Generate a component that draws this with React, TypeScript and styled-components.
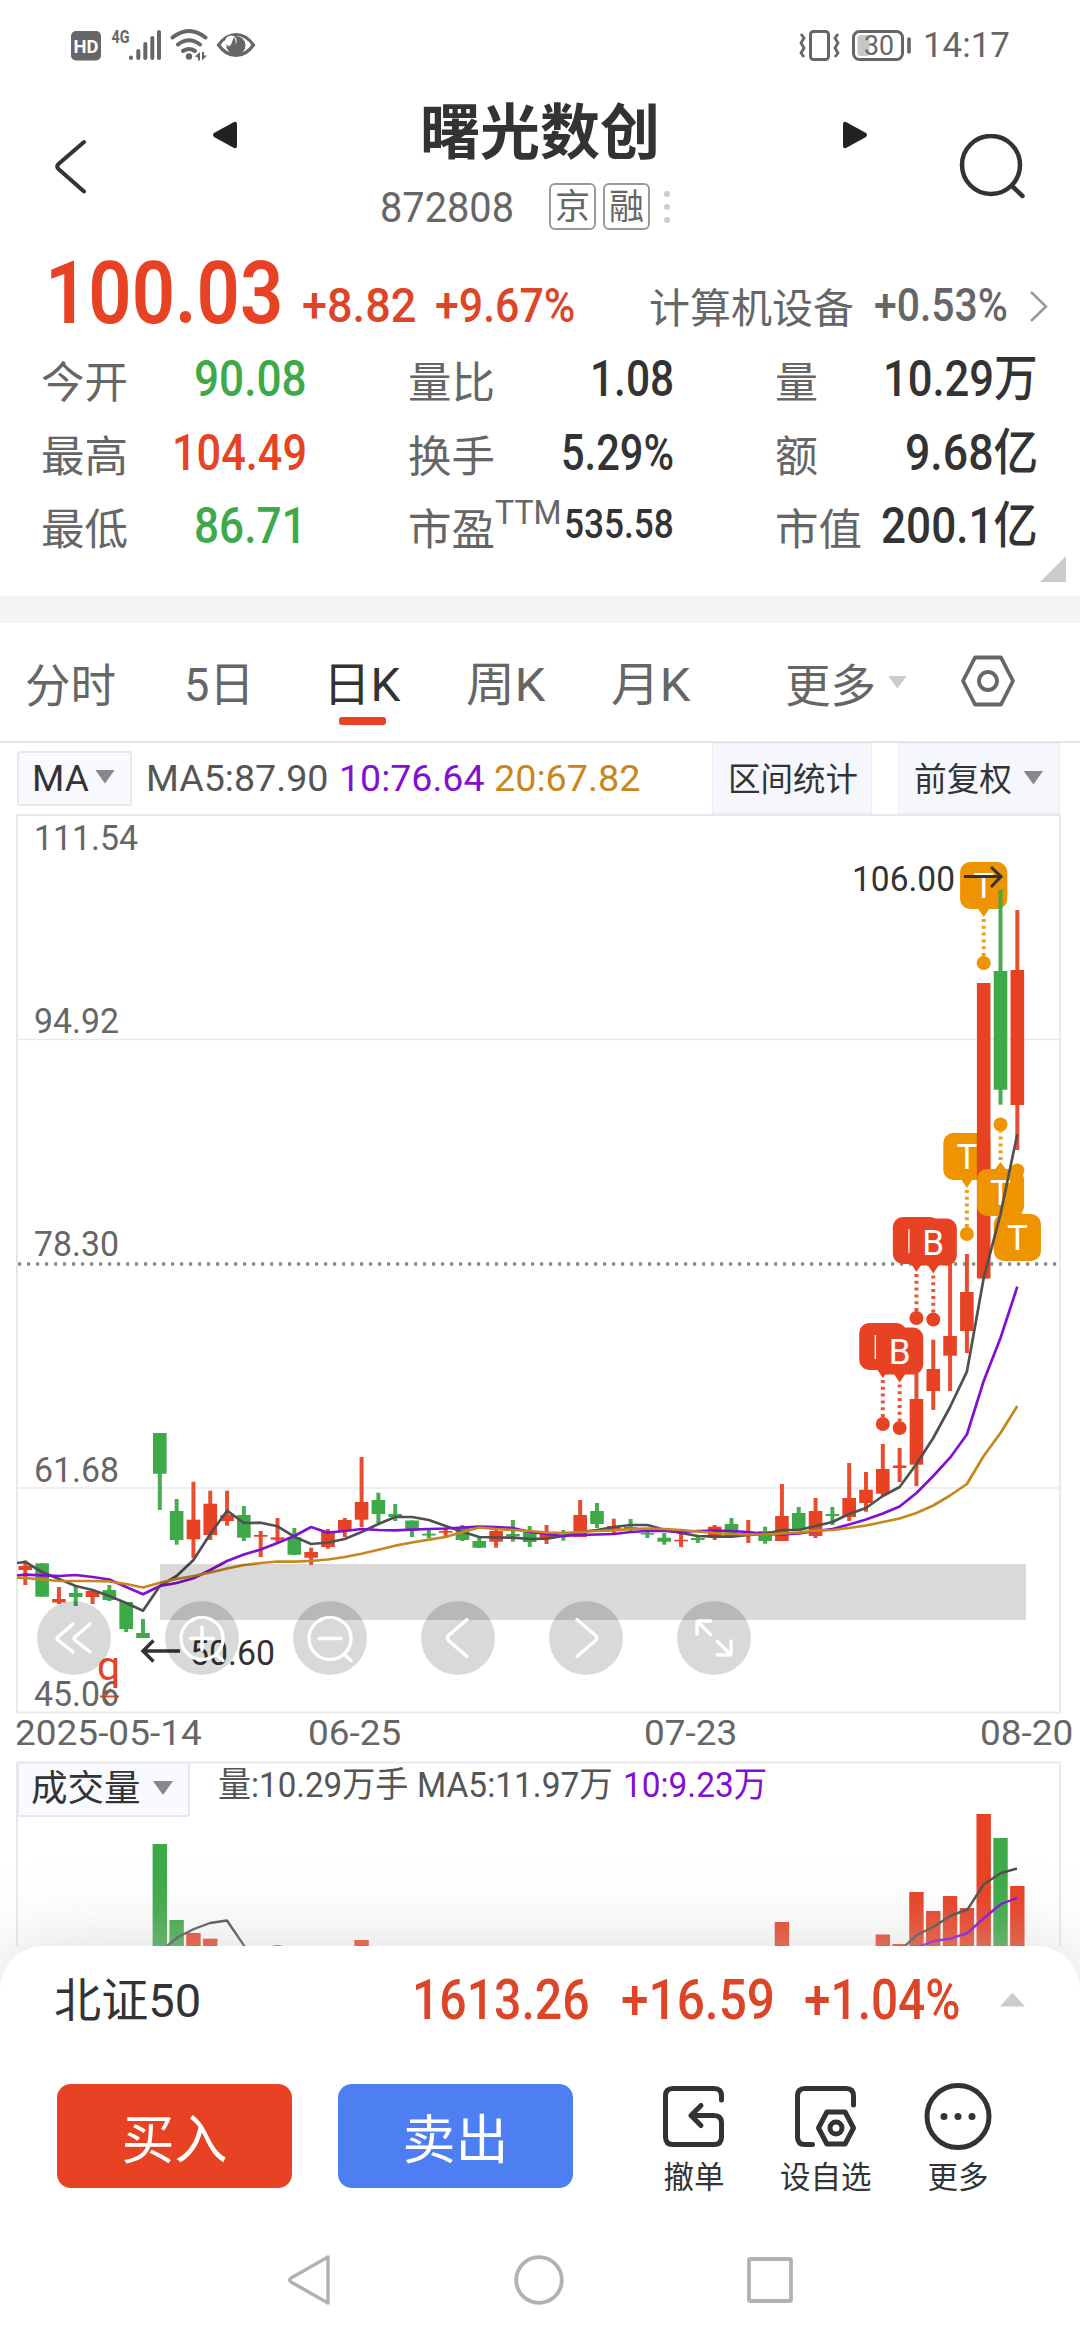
import React, { useLayoutEffect, useRef, useState } from "react";
import styled, { createGlobalStyle } from "styled-components";

const RED = "#e84224";
const GREEN = "#3ea948";
const INK = "#333333";
const GREY = "#666666";
const PURPLE = "#8210d2";
const GOLD = "#c8871e";
const AMBER = "#ed9400";
const LINE = "#e9e9e9";

const GlobalStyle = createGlobalStyle`
  * { box-sizing: border-box; }
  body {
    margin: 0;
    background: #fff;
    font-family: Roboto, "Noto Sans CJK SC", sans-serif;
    color: ${INK};
  }
  svg { display: block; flex: none; }
  svg text { font-family: Roboto, "Noto Sans CJK SC", sans-serif; }
`;

/* ---------- text fitted to a fixed advance width ---------- */

type LabelProps = {
  w: number;
  size: number;
  color?: string;
  weight?: number;
  ml?: number;
  dy?: number;
  children: React.ReactNode;
};

const LabelBox = styled.span<{ $w: number; $size: number; $color: string; $weight: number; $ml: number }>`
  display: block;
  flex: none;
  width: ${(p) => p.$w}px;
  margin-left: ${(p) => p.$ml}px;
  font-size: ${(p) => p.$size}px;
  font-weight: ${(p) => p.$weight};
  line-height: ${(p) => p.$size}px;
  color: ${(p) => p.$color};
  white-space: nowrap;
`;

const LabelInk = styled.span`
  display: inline-block;
  transform-origin: 0 50%;
`;

function Label({ w, size, color = INK, weight = 400, ml = 0, dy = 0, children }: LabelProps) {
  const ref = useRef<HTMLSpanElement>(null);
  const [scale, setScale] = useState(1);
  useLayoutEffect(() => {
    if (ref.current) setScale(w / ref.current.offsetWidth);
  }, [w, size, children]);
  return (
    <LabelBox $w={w} $size={size} $color={color} $weight={weight} $ml={ml}>
      <LabelInk ref={ref} style={{ transform: `translateY(${dy}px) scaleX(${scale})` }}>
        {children}
      </LabelInk>
    </LabelBox>
  );
}

/* ---------- layout ---------- */

const Screen = styled.main`
  width: 1080px;
  height: 2340px;
  overflow: hidden;
  background: #fff;
  display: flex;
  flex-direction: column;
`;

const StatusBar = styled.div`
  height: 89px;
  flex: none;
  display: flex;
  align-items: center;
  justify-content: space-between;
  padding: 0 70px;
`;

const Cluster = styled.div<{ $ml?: number }>`
  display: flex;
  align-items: center;
  margin-left: ${(p) => p.$ml ?? 0}px;
`;

const Header = styled.header`
  height: 156px;
  flex: none;
  display: grid;
  grid-template-columns: 212px 656px 212px;
`;

const HeaderSide = styled.div<{ $end?: boolean }>`
  display: flex;
  align-items: center;
  justify-content: ${(p) => (p.$end ? "flex-end" : "flex-start")};
  padding: 0 55px 0 54px;
`;

const TitleRow = styled.div`
  height: 86px;
  display: flex;
  align-items: center;
  justify-content: space-between;
`;

const StepArrow = styled.svg`
  width: 25px;
  height: 28px;
  margin-top: 6px;
  fill: #222;
`;

const CodeRow = styled.div`
  height: 63px;
  display: flex;
  align-items: center;
  padding-left: 168px;
`;

const Tag = styled.span`
  width: 47px;
  height: 47px;
  margin-right: 7px;
  border: 2px solid #999;
  border-radius: 6px;
  display: flex;
  align-items: center;
  justify-content: center;
  font-size: 35px;
  line-height: 43px;
  padding-top: 2px;
  color: ${GREY};
`;

const Dots = styled.span`
  display: grid;
  gap: 7px;
  margin-left: 7px;
  i {
    width: 6px;
    height: 6px;
    border-radius: 3px;
    background: #ccc;
  }
`;

const PriceRow = styled.section`
  height: 97px;
  flex: none;
  padding: 4px 32px 0 45px;
  display: flex;
  align-items: baseline;
`;

const Chevron = styled.svg`
  width: 20px;
  height: 32px;
  margin-left: 21px;
  fill: none;
  stroke: #999;
  stroke-width: 2.5;
`;

const Stats = styled.section`
  position: relative;
  height: 254px;
  flex: none;
  padding: 0 42px 0 41px;
  display: grid;
  grid-template-columns: 266px 367px 364px;
  grid-auto-rows: 73.5px;
`;

const Stat = styled.div<{ $pad: number }>`
  display: flex;
  align-items: baseline;
  justify-content: space-between;
  padding: 12px 0 0 ${(p) => p.$pad}px;
`;

/* The zero-width strut keeps every row on the same baseline. */
const LabelGroup = styled.div`
  display: flex;
  align-items: baseline;
  &::before {
    content: "\\200b";
    width: 0;
    font-size: 50px;
    line-height: 50px;
  }
`;

const Fold = styled.i`
  position: absolute;
  right: 14px;
  bottom: 14px;
  border-style: solid;
  border-width: 0 0 26px 26px;
  border-color: transparent transparent #ccc transparent;
`;

const Band = styled.div`
  height: 27px;
  flex: none;
  background: #f4f4f4;
`;

const Tabs = styled.nav`
  height: 120px;
  flex: none;
  display: flex;
  align-items: center;
  padding-left: 25px;
  border-bottom: 2px solid #e6e6e6;
`;

const Tab = styled.div<{ $active?: boolean; $ml?: number }>`
  height: 118px;
  margin-left: ${(p) => p.$ml ?? 0}px;
  padding-top: 38px;
  display: flex;
  flex-direction: column;
  align-items: center;
  gap: 9px;
  &::after {
    content: "";
    width: 47px;
    height: 8px;
    border-radius: 3px;
    background: ${(p) => (p.$active ? RED : "transparent")};
  }
`;

const SettingsIcon = styled.svg`
  width: 56px;
  height: 54px;
  margin-left: 53px;
  fill: none;
  stroke: ${GREY};
  stroke-width: 3.8;
`;

const Caret = styled.i<{ $w: number; $h: number; $color: string; $up?: boolean; $ml?: number; $mt?: number }>`
  flex: none;
  width: ${(p) => p.$w}px;
  height: ${(p) => p.$h}px;
  margin-left: ${(p) => p.$ml ?? 0}px;
  margin-top: ${(p) => p.$mt ?? 0}px;
  background: ${(p) => p.$color};
  clip-path: ${(p) => (p.$up ? "polygon(50% 0, 100% 100%, 0 100%)" : "polygon(0 0, 100% 0, 50% 100%)")};
`;

const Toolbar = styled.div`
  height: 71px;
  flex: none;
  display: flex;
  align-items: center;
  padding: 0 20px 0 17px;
`;

const Picker = styled.div<{ $w: number; $pad: number }>`
  width: ${(p) => p.$w}px;
  height: 55px;
  padding-left: ${(p) => p.$pad}px;
  display: flex;
  align-items: center;
  background: #f9faff;
  border: 2px solid #e8e8ea;
  border-radius: 3px;
`;

const SoftButton = styled.div<{ $w: number; $ml: number }>`
  width: ${(p) => p.$w}px;
  height: 71px;
  margin-left: ${(p) => p.$ml}px;
  padding-left: 15px;
  display: flex;
  align-items: center;
  background: #f5f7fd;
  border: 1px solid #eceef4;
`;

const ChartArea = styled.section`
  position: relative;
  height: 900px;
  flex: none;
`;

const Controls = styled.div`
  position: absolute;
  left: 37px;
  top: 787px;
  display: flex;
  gap: 54px;
`;

const Control = styled.button`
  width: 74px;
  height: 74px;
  padding: 0;
  border: 0;
  border-radius: 50%;
  background: rgba(0, 0, 0, 0.15);
`;

const Dates = styled.div`
  height: 47px;
  flex: none;
  display: flex;
  align-items: center;
  padding: 0 0 8px 15px;
`;

const VolumePanel = styled.section`
  position: relative;
  height: 185px;
  flex: none;
`;

const VolumeHead = styled.div`
  position: absolute;
  left: 17px;
  top: 1px;
  display: flex;
  align-items: center;
`;

const Sheet = styled.section`
  position: relative;
  flex: 1;
  background: #fff;
  border-radius: 44px 44px 0 0;
  box-shadow: 0 0 72px rgba(198, 198, 198, 0.62);
`;

const IndexRow = styled.div`
  height: 107px;
  padding: 0 0 0 54px;
  display: flex;
  align-items: center;
`;

const Actions = styled.div`
  height: 110px;
  margin-top: 30px;
  padding-left: 57px;
  display: flex;
  align-items: flex-start;
`;

const Trade = styled.button<{ $bg: string }>`
  width: 235px;
  height: 104px;
  margin: 1px 46px 0 0;
  padding: 4px 0 0;
  border: 0;
  border-radius: 14px;
  display: flex;
  align-items: center;
  justify-content: center;
  background: ${(p) => p.$bg};
  font-family: inherit;
`;

const Tool = styled.div<{ $w: number }>`
  width: ${(p) => p.$w}px;
  display: flex;
  flex-direction: column;
  align-items: center;
  gap: 11px;
`;

const NavBar = styled.div`
  height: 60px;
  margin-top: 57px;
  padding: 0 287px;
  display: flex;
  align-items: center;
  justify-content: space-between;
`;

/* ---------- data ---------- */

const X0 = 25.3;
const STEP = 16.814;
const cx = (i: number) => X0 + i * STEP;

type Candle = ["r" | "g", number, number, number, number];

const CANDLES: Candle[] = [
  ["r", 1559.5, 1565, 1569, 1584], ["g", 1562.3, 1562.3, 1595.7, 1595.7], ["r", 1586, 1598, 1601.5, 1603],
  ["g", 1585, 1592, 1596, 1605], ["r", 1588, 1590, 1596, 1603], ["g", 1584, 1589, 1599, 1600],
  ["g", 1601, 1601, 1628, 1631], ["g", 1618, 1632, 1637, 1637], ["g", 1432, 1432, 1472.7, 1509],
  ["g", 1498, 1510, 1539, 1543.7], ["r", 1480.7, 1518.7, 1538.3, 1557], ["r", 1489.7, 1502.7, 1534, 1539],
  ["r", 1489.7, 1514, 1520, 1524.7], ["g", 1505, 1514, 1536.7, 1540], ["r", 1530, 1534, 1535.7, 1556],
  ["r", 1517, 1536.3, 1538.7, 1542], ["g", 1527, 1536.3, 1553.7, 1554], ["r", 1546.7, 1551, 1556.7, 1563.7],
  ["r", 1528, 1531, 1546, 1547.7], ["r", 1517, 1519, 1530, 1536], ["r", 1456, 1501, 1518.7, 1526],
  ["g", 1491.7, 1499, 1513, 1522], ["g", 1503, 1513, 1516, 1520], ["g", 1519.5, 1519.5, 1528, 1536],
  ["g", 1529, 1532.7, 1534.5, 1537], ["r", 1526.7, 1530, 1531.7, 1536.7], ["g", 1524, 1527, 1539, 1540],
  ["g", 1537, 1540, 1546.7, 1547], ["r", 1527.7, 1530, 1540.7, 1546.7], ["g", 1519, 1533, 1535.3, 1540.7],
  ["g", 1525, 1531, 1541, 1546], ["r", 1524, 1532, 1537.5, 1543], ["g", 1529, 1531, 1532.5, 1539.7],
  ["r", 1499, 1514, 1536, 1536], ["g", 1502, 1510, 1523, 1527], ["r", 1517.7, 1525, 1530, 1532],
  ["g", 1518, 1526, 1528, 1530], ["g", 1528, 1532, 1533.5, 1537], ["g", 1532, 1536.7, 1540.7, 1543.7],
  ["r", 1533, 1538.7, 1540.3, 1546], ["g", 1535, 1537, 1539, 1542], ["r", 1524, 1525.7, 1536.7, 1539],
  ["g", 1517, 1523, 1535, 1536], ["r", 1519, 1531, 1533, 1542], ["g", 1525.7, 1530, 1540, 1542.7],
  ["r", 1483, 1515, 1540, 1540], ["g", 1506, 1512, 1528.7, 1529], ["r", 1497, 1510, 1535, 1537],
  ["g", 1506, 1513, 1515, 1524], ["r", 1462, 1497, 1516, 1520], ["r", 1471, 1488.7, 1502, 1510.7],
  ["r", 1443, 1468, 1492.7, 1495], ["r", 1447, 1464.5, 1467, 1481], ["r", 1367, 1398, 1463.7, 1485],
  ["r", 1338.7, 1368, 1390, 1409], ["r", 1263, 1335, 1354.7, 1390], ["r", 1253, 1291, 1330, 1352],
  ["r", 982, 982, 1277.5, 1277.5], ["g", 888.7, 970, 1088.7, 1103.7], ["r", 909, 969, 1104, 1149],
];

const MA5 = [
  1561, 1571, 1578, 1585, 1589, 1595, 1602, 1609.7, 1585, 1575, 1559, 1533, 1509.7, 1522, 1521.7, 1525.3, 1535.7,
  1543, 1541.5, 1538, 1531, 1523, 1516, 1516, 1519, 1525, 1530.7, 1536, 1536.5, 1536.7, 1538, 1537.7, 1535, 1531,
  1529, 1526, 1524, 1524, 1528.7, 1532, 1535, 1535.7, 1535.7, 1534, 1533, 1529, 1529, 1525, 1521, 1513, 1507, 1495,
  1486, 1463, 1437, 1406, 1370.7, 1277, 1213, 1133,
];
const MA10 = [
  1573.7, 1574.3, 1575, 1574, 1576, 1578.5, 1586, 1593.3, 1585, 1582, 1577.3, 1569, 1560, 1553.5, 1548.5, 1542, 1535,
  1526, 1531.7, 1530, 1528, 1529, 1529.3, 1528.7, 1528, 1527.5, 1526.5, 1525.7, 1526, 1527, 1531, 1533, 1535, 1534,
  1533.5, 1533, 1531, 1530, 1530, 1531, 1530, 1529.5, 1530, 1531, 1533, 1533.5, 1532.5, 1530, 1528, 1523.5, 1518.5,
  1512.5, 1505.5, 1492, 1475, 1456.7, 1433.5, 1380, 1337, 1285.7,
];
const MA20 = [
  1577, 1578.5, 1580, 1580, 1580, 1580.5, 1583, 1586.5, 1581.7, 1578, 1575, 1571.5, 1567.5, 1564, 1562, 1560.5,
  1560.7, 1560, 1558.5, 1556, 1552.7, 1548.7, 1544.7, 1541.5, 1538.7, 1536, 1531, 1526.5, 1528, 1529, 1530, 1531.5,
  1532, 1531, 1530, 1529.3, 1528, 1527.5, 1528, 1529, 1530.5, 1532, 1533, 1533.5, 1533.5, 1532.5, 1531.5, 1529.7,
  1529, 1527, 1524.5, 1521, 1517.5, 1512, 1504.5, 1494.5, 1483, 1455, 1432, 1405,
];

const VOLUMES: [number, "r" | "g", number][] = [
  [8, "g", 1843], [9, "g", 1919], [10, "r", 1932], [11, "r", 1937.7], [20, "r", 1939], [45, "r", 1921],
  [51, "r", 1933.5], [52, "r", 1943], [53, "r", 1891], [54, "r", 1910], [55, "r", 1895], [56, "r", 1907],
  [57, "r", 1813], [58, "g", 1837], [59, "r", 1885],
];

const tone = (c: "r" | "g") => (c === "r" ? RED : GREEN);
const path = (start: number, ys: number[]) => `17,${start} ` + ys.map((y, i) => `${cx(i)},${y}`).join(" ");

/* ---------- chart pieces ---------- */

const Candles = () => (
  <>
    {CANDLES.map(([c, hi, top, bot, lo], i) => (
      <g key={i} fill={tone(c)}>
        <rect x={cx(i) - 2} y={hi} width={4} height={lo - hi} opacity={0.95} />
        <rect x={cx(i) - 6.8} y={top} width={13.6} height={bot - top} />
      </g>
    ))}
  </>
);

type PinProps = { i: number; top: number; dot: number; color: string; text?: string; up?: boolean };

function Pin({ i, top, dot, color, text, up }: PinProps) {
  const x = cx(i);
  return (
    <g>
      <line
        x1={x} x2={x}
        y1={up ? top - 9 : top + 57} y2={up ? dot + 7 : dot - 7}
        stroke={color} strokeWidth={4} strokeDasharray="3 3.8" opacity={0.9}
      />
      <circle cx={x} cy={dot} r={7} fill={color} />
      <rect x={x - 23.6} y={top} width={47.2} height={47} rx={10} fill={color} />
      <path
        d={up ? `M${x - 6} ${top + 1}l6 -8l6 8z` : `M${x - 6} ${top + 46}l6 9l6 -9z`}
        fill={color}
      />
      {text === "|" ? (
        <line x1={x - 7.4} x2={x - 7.4} y1={top + 12} y2={top + 36} stroke="#fff" strokeWidth={1.5} />
      ) : (
        <text x={x} y={top + 36} fontSize={35} fill="#fff" textAnchor="middle">{text}</text>
      )}
    </g>
  );
}

const SCALE: [string, number, number][] = [
  ["111.54", 848.5, 104], ["94.92", 1031.5, 85], ["78.30", 1255, 85], ["61.68", 1480.5, 85], ["45.06", 1704.5, 85],
];

function PriceChart() {
  return (
    <svg width={1080} height={900} viewBox="0 813 1080 900">
      <g stroke={LINE} strokeWidth={2} fill="none">
        <rect x={17} y={814} width={1043} height={897.5} />
        <path d="M17 1038.5H1059M17 1487H1059" strokeWidth={1.6} />
      </g>
      <line x1={18} x2={1058} y1={1263} y2={1263} stroke="#8c8c8c" strokeWidth={3.5} strokeDasharray="3.2 5.8" />
      <Pin i={57} top={861} dot={962} color={AMBER} text="T" />
      <Pin i={56} top={1132} dot={1233} color={AMBER} text="T" />
      <Candles />
      <Pin i={53} top={1216} dot={1317} color={RED} text="|" />
      <Pin i={54} top={1217.5} dot={1318.5} color={RED} text="B" />
      <Pin i={51} top={1322} dot={1423} color={RED} text="|" />
      <Pin i={52} top={1326.5} dot={1427} color={RED} text="B" />
      <Pin i={59} top={1213} dot={1169.5} color={AMBER} text="T" up />
      <Pin i={58} top={1168} dot={1123.5} color={AMBER} text="T" up />
      <g fill="none" strokeWidth={2.7} strokeLinejoin="round">
        <polyline points={path(1562, MA5)} stroke="#505050" />
        <polyline points={path(1574.5, MA10)} stroke={PURPLE} />
        <polyline points={path(1576.7, MA20)} stroke={GOLD} />
      </g>
      <rect x={160} y={1563} width={866} height={56} fill="#000" opacity={0.15} />
      <g fill={RED}>
        <text x={97} y={1679} fontSize={41}>q</text>
        <path d="M100 1695.5H119M103 1696L109 1703M111 1688l-5 6" stroke={RED} strokeWidth={2} />
      </g>
      <g fill={GREY} fontSize={35}>
        {SCALE.map(([t, y, w]) => (
          <text key={t} x={34} y={y} textLength={w} lengthAdjust="spacingAndGlyphs">{t}</text>
        ))}
      </g>
      <g stroke={INK} fill="none">
        <path d="M964 875.5H1000M991 866L1001 875.5L991 886" strokeWidth={3} />
        <path d="M180 1650H144M153.5 1639.5L143 1650L153.5 1660.5" strokeWidth={3.4} />
      </g>
      <g fill={INK} fontSize={35}>
        <text x={852} y={889.5} textLength={103} lengthAdjust="spacingAndGlyphs">106.00</text>
        <text x={190} y={1663.5} textLength={85} lengthAdjust="spacingAndGlyphs">50.60</text>
      </g>
    </svg>
  );
}

function VolumeChart() {
  return (
    <svg width={1080} height={185} viewBox="0 1760 1080 185">
      <path d="M17 1945V1761.5H1060V1945" fill="none" stroke={LINE} strokeWidth={2} />
      {VOLUMES.map(([i, c, y]) => (
        <rect key={i} x={cx(i) - 7.2} y={y} width={14.4} height={1945 - y} fill={tone(c)} />
      ))}
      <g fill="none" strokeWidth={2.4} strokeLinejoin="round">
        <path d="M167 1945L178 1936L194 1928L210 1922L227 1919.5L245 1946" stroke="#505050" />
        <path d="M905 1945L917 1934L934 1925.5L951 1914.5L967.5 1908.5L984 1883L1001 1872L1017 1867.5" stroke="#505050" />
        <path d="M918 1946L934 1940L951 1937.5L967.5 1932L984 1917L1001 1903L1017 1897" stroke={PURPLE} />
        <path d="M271 1946.5Q277 1944.5 284 1946.5" stroke={PURPLE} />
      </g>
    </svg>
  );
}

const CONTROL_ICONS = [
  "M36 23L21 36Q19 37.5 21 39L36 51M53 23L38 36Q36 37.5 38 39L53 51",
  "M58 37.5A21 21 0 1 1 16 37.5A21 21 0 1 1 58 37.5M37 26V49M25.5 37.5H48.5M51 53L58 59.5",
  "M58 37.5A21 21 0 1 1 16 37.5A21 21 0 1 1 58 37.5M26 37.5H48M51 53L58 59.5",
  "M46 18.5L27.5 34.5Q25 37 27.5 39.5L46 55.5",
  "M28 18.5L46.5 34.5Q49 37 46.5 39.5L28 55.5",
  "M20 33V22Q20 20 22 20H33.5M21 21L33.5 33.5M54 40V52Q54 54 52 54H40M53 53L40.5 40.5",
];

const hexagon = (x: number, y: number, rx: number, ry: number) =>
  `M${x - rx} ${y}L${x - rx * 0.52} ${y - ry}H${x + rx * 0.52}L${x + rx} ${y}L${x + rx * 0.52} ${y + ry}H${x - rx * 0.52}Z`;

/* ---------- screen ---------- */

type StatItem = { name: string; nw: number; value: string; vw: number; color?: string; size?: number; sup?: string };

const STATS: StatItem[] = [
  { name: "今开", nw: 87, value: "90.08", vw: 113, color: GREEN },
  { name: "量比", nw: 87, value: "1.08", vw: 84 },
  { name: "量", nw: 43.5, value: "10.29万", vw: 155 },
  { name: "最高", nw: 87, value: "104.49", vw: 135, color: RED },
  { name: "换手", nw: 87, value: "5.29%", vw: 113 },
  { name: "额", nw: 43.5, value: "9.68亿", vw: 133 },
  { name: "最低", nw: 87, value: "86.71", vw: 113, color: GREEN },
  { name: "市盈", nw: 87, value: "535.58", vw: 110, size: 40, sup: "TTM" },
  { name: "市值", nw: 87, value: "200.1亿", vw: 157 },
];

export default function App() {
  return (
    <Screen>
      <GlobalStyle />
      <StatusBar>
        <Cluster>
          <svg width={190} height={36} viewBox="70 26 190 36" fill={GREY}>
            <rect x={71} y={30} width={30} height={29.5} rx={5} />
            <text x={73.5} y={52} fontSize={19} fontWeight={700} fill="#fff" textLength={25} lengthAdjust="spacingAndGlyphs">HD</text>
            <text x={111.5} y={42} fontSize={18} fontWeight={700} textLength={18} lengthAdjust="spacingAndGlyphs">4G</text>
            <g stroke={GREY} strokeWidth={4} strokeLinecap="round" fill="none">
              <path d="M131 56.5V57M138.3 50V57M145.3 43V57M152.3 37V57M159 31V57" />
              <path d="M172.5 36.5Q189 23.5 205.5 36.5M178 43.5Q189 35 200 43.5M183 50Q189 46 195 50" />
              <path d="M218.5 44Q226 33.5 236 33.5T253.5 44Q246 54.5 236 54.5T218.5 44Z" strokeWidth={3.2} />
            </g>
            <circle cx={189} cy={55.5} r={3.2} />
            <path d="M195 55.5L200 51V59.5H198V56.5ZM202 51V59.5L207 54.5H204V51Z" />
            <circle cx={236} cy={44.5} r={9.5} />
            <circle cx={231} cy={40} r={5.6} fill="#fff" />
            <path d="M234 36q4 6 -1 12q-5 2 -7 -2q5 0 6 -5z" />
          </svg>
        </Cluster>
        <Cluster>
          <svg width={114} height={36} viewBox="798 26 114 36" fill="none" stroke={GREY}>
            <rect x={810.5} y={30.5} width={18} height={28} rx={3} strokeWidth={3} />
            <path d="M801 33l3 4l-3 5l3 5l-3 5l3 4M838 33l-3 4l3 5l-3 5l3 5l-3 4" strokeWidth={2.8} />
            <rect x={853.5} y={30.5} width={49} height={28} rx={6} strokeWidth={3} />
            <rect x={857.5} y={34} width={12} height={21} rx={3} fill="#c6c6c6" stroke="none" />
            <path d="M909 38V51" strokeWidth={3.6} strokeLinecap="round" />
            <text x={864} y={54} fontSize={27} fill={GREY} stroke="none" textLength={30} lengthAdjust="spacingAndGlyphs">30</text>
          </svg>
          <Label w={87} size={34.5} color={GREY} ml={11} dy={1}>14:17</Label>
        </Cluster>
      </StatusBar>

      <Header>
        <HeaderSide>
          <svg width={34} height={56} viewBox="54 139 34 56" fill="none" stroke={INK} strokeWidth={4} strokeLinecap="round">
            <path d="M84 142L58.5 164Q56 166.5 58.5 169L84 191.5" />
          </svg>
        </HeaderSide>
        <div>
          <TitleRow>
            <StepArrow viewBox="0 0 25 28"><path d="M22 1Q25 0 25 4V24Q25 28 22 27L2 16Q0 14 2 12Z" /></StepArrow>
            <Label w={240} size={60} weight={700} dy={2}>曙光数创</Label>
            <StepArrow viewBox="0 0 25 28"><path d="M3 1Q0 0 0 4V24Q0 28 3 27L23 16Q25 14 23 12Z" /></StepArrow>
          </TitleRow>
          <CodeRow>
            <Label w={134} size={43} color={GREY} dy={1}>872808</Label>
            <Cluster $ml={35}>
              <Tag>京</Tag>
              <Tag>融</Tag>
              <Dots><i /><i /><i /></Dots>
            </Cluster>
          </CodeRow>
        </div>
        <HeaderSide $end>
          <svg width={66} height={66} viewBox="958 134 66 66" fill="none" stroke={INK} strokeWidth={4.5} strokeLinecap="round">
            <circle cx={990} cy={165} r={29} />
            <path d="M1011 186L1021.5 196" />
          </svg>
        </HeaderSide>
      </Header>

      <PriceRow>
        <Label w={238} size={88} weight={600} color={RED}>100.03</Label>
        <Label w={114} size={49} weight={500} color="#dc4528" ml={19} dy={-1}>+8.82</Label>
        <Label w={140} size={49} weight={500} color="#dc4528" ml={19} dy={-1}>+9.67%</Label>
        <Label w={205} size={41} color={GREY} ml={74} dy={0}>计算机设备</Label>
        <Label w={134} size={47} weight={500} color={GREY} ml={20} dy={-2}>+0.53%</Label>
        <Chevron viewBox="0 0 20 32">
          <path d="M2 1L17 15.5L2 30" />
        </Chevron>
      </PriceRow>

      <Stats>
        {STATS.map((s, i) => (
          <Stat key={s.name} $pad={i % 3 === 0 ? 0 : 101}>
            <LabelGroup>
              <Label w={s.nw} size={43.5} color={GREY} dy={1.5}>{s.name}</Label>
              {s.sup && <Label w={67} size={34} color={GREY} dy={-19}>{s.sup}</Label>}
            </LabelGroup>
            <Label w={s.vw} size={s.size ?? 50} weight={500} color={s.color} dy={s.size ? -5 : 0}>{s.value}</Label>
          </Stat>
        ))}
        <Fold />
      </Stats>

      <Band />

      <Tabs>
        <Tab><Label w={91} size={46} color={GREY} dy={2}>分时</Label></Tab>
        <Tab $ml={68}><Label w={70} size={47} color={GREY}>5日</Label></Tab>
        <Tab $ml={69} $active><Label w={78} size={47}>日K</Label></Tab>
        <Tab $ml={65}><Label w={80} size={47} color={GREY}>周K</Label></Tab>
        <Tab $ml={65}><Label w={80} size={47} color={GREY}>月K</Label></Tab>
        <Tab $ml={94}><Label w={91} size={46} color={GREY} dy={2}>更多</Label></Tab>
        <Caret $w={19} $h={13} $color="#ccc" $ml={12} $mt={0} />
        <SettingsIcon viewBox="0 0 56 54">
          <path d={hexagon(28, 26, 25, 23.5)} strokeLinejoin="round" />
          <circle cx={28} cy={26} r={9} />
        </SettingsIcon>
      </Tabs>

      <Toolbar>
        <Picker $w={115} $pad={13}>
          <Label w={57} size={37}>MA</Label>
          <Caret $w={20} $h={14} $color="#888" $ml={6} $mt={-4} />
        </Picker>
        <Label w={182} size={37} color="#555" ml={14}>MA5:87.90</Label>
        <Label w={145} size={37} color={PURPLE} ml={11}>10:76.64</Label>
        <Label w={146} size={37} color={GOLD} ml={10}>20:67.82</Label>
        <SoftButton $w={161} $ml={72}>
          <Label w={130} size={33} dy={1}>区间统计</Label>
        </SoftButton>
        <SoftButton $w={162} $ml={26}>
          <Label w={98} size={33} dy={1}>前复权</Label>
          <Caret $w={20} $h={14} $color="#888" $ml={11} $mt={-2} />
        </SoftButton>
      </Toolbar>

      <ChartArea>
        <PriceChart />
        <Controls>
          {CONTROL_ICONS.map((d) => (
            <Control key={d}>
              <svg width={74} height={74} viewBox="0 0 74 74" fill="none" stroke="#fff" strokeWidth={3.4} strokeLinecap="round">
                <path d={d} />
              </svg>
            </Control>
          ))}
        </Controls>
      </ChartArea>

      <Dates>
        <Label w={187} size={35} color={GREY}>2025-05-14</Label>
        <Label w={93} size={35} color={GREY} ml={106}>06-25</Label>
        <Label w={93} size={35} color={GREY} ml={243}>07-23</Label>
        <Label w={93} size={35} color={GREY} ml={243}>08-20</Label>
      </Dates>

      <VolumePanel>
        <VolumeChart />
        <VolumeHead>
          <Picker $w={173} $pad={12}>
            <Label w={110} size={36.5} dy={0}>成交量</Label>
            <Caret $w={20} $h={14} $color="#888" $ml={12} $mt={-3} />
          </Picker>
          <Label w={190} size={35} color="#555" ml={28} dy={-4}>量:10.29万手</Label>
          <Label w={196} size={35} color="#555" ml={9} dy={-4}>MA5:11.97万</Label>
          <Label w={144} size={35} color={PURPLE} ml={10} dy={-4}>10:9.23万</Label>
        </VolumeHead>
      </VolumePanel>

      <Sheet>
        <IndexRow>
          <Label w={147} size={46.5} dy={2}>北证50</Label>
          <Label w={178} size={56} weight={500} color="#dc4528" ml={211}>1613.26</Label>
          <Label w={154} size={56} weight={500} color="#dc4528" ml={31}>+16.59</Label>
          <Label w={156} size={56} weight={500} color="#dc4528" ml={29}>+1.04%</Label>
          <Caret $w={25} $h={14} $color="#ccc" $up $ml={40} />
        </IndexRow>
        <Actions>
          <Trade $bg={RED}><Label w={106} size={53} color="#fff" dy={3}>买入</Label></Trade>
          <Trade $bg="#4d7ef2"><Label w={106} size={53} color="#fff" dy={3}>卖出</Label></Trade>
          <Tool $w={150}>
            <svg width={70} height={68} viewBox="660 2082 70 68" fill="none" stroke={INK} strokeWidth={5} strokeLinecap="round" strokeLinejoin="round">
              <path d="M722.5 2099V2095Q722.5 2087.5 715 2087.5H674Q666.5 2087.5 666.5 2095V2136Q666.5 2143.5 674 2143.5H715Q722.5 2143.5 722.5 2136V2122Q722.5 2114.5 715 2114.5H692M702 2104.5L692 2114.5L702 2124.5" />
            </svg>
            <Label w={61} size={30.5} dy={1}>撤单</Label>
          </Tool>
          <Tool $w={114}>
            <svg width={70} height={68} viewBox="791 2082 70 68" fill="none" stroke={INK} strokeWidth={5} strokeLinecap="round" strokeLinejoin="round">
              <path d="M853.5 2104V2095Q853.5 2087.5 846 2087.5H805Q797.5 2087.5 797.5 2095V2136Q797.5 2143.5 805 2143.5H812.5" />
              <path d={hexagon(836, 2127, 17.5, 16)} />
              <circle cx={836} cy={2127} r={6} />
            </svg>
            <Label w={92} size={30.5} dy={1}>设自选</Label>
          </Tool>
          <Tool $w={150}>
            <svg width={70} height={68} viewBox="922 2082 70 68" fill={INK}>
              <circle cx={957} cy={2115.5} r={31} fill="none" stroke={INK} strokeWidth={5} />
              <circle cx={943} cy={2115.5} r={3.5} />
              <circle cx={957} cy={2115.5} r={3.5} />
              <circle cx={971} cy={2115.5} r={3.5} />
            </svg>
            <Label w={61} size={30.5} dy={1}>更多</Label>
          </Tool>
        </Actions>
        <NavBar>
          <svg width={44} height={52} viewBox="0 0 44 52" fill="none" stroke="#b2b2b2" strokeWidth={3.5} strokeLinejoin="round">
            <path d="M41 3V49L4 28Q1.500 26 4 24Z" />
          </svg>
          <svg width={50} height={50} viewBox="0 0 50 50" fill="none" stroke="#b2b2b2" strokeWidth={3.8}>
            <circle cx={25} cy={25} r={22.8} />
          </svg>
          <svg width={46} height={46} viewBox="0 0 46 46" fill="none" stroke="#b2b2b2" strokeWidth={3.8}>
            <rect x={2} y={2} width={42} height={42} rx={1.5} />
          </svg>
        </NavBar>
      </Sheet>
    </Screen>
  );
}
